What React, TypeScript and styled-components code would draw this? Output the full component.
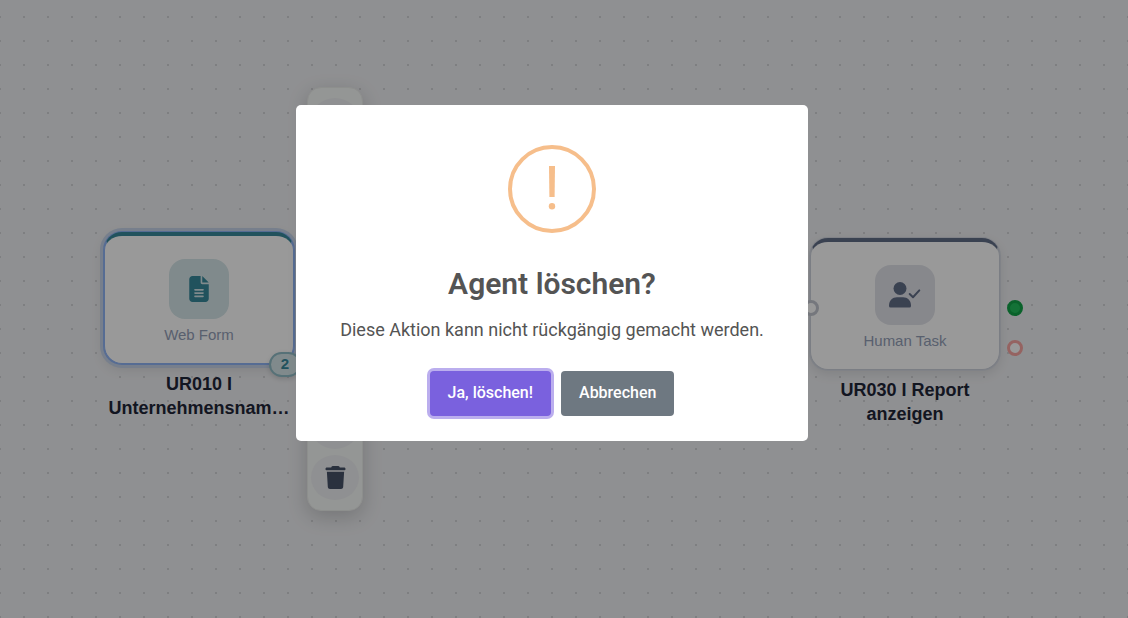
import React from 'react';
import styled, { createGlobalStyle } from 'styled-components';
import { FaFileLines, FaTrash } from 'react-icons/fa6';

const GlobalStyle = createGlobalStyle`
  *, *::before, *::after { box-sizing: border-box; }
  body { margin: 0; font-family: Roboto, 'Liberation Sans', sans-serif; }
`;

const Canvas = styled.main`
  position: relative;
  min-height: 100vh;
  overflow: hidden;
  background-color: #eff0f3;
  background-image: conic-gradient(from 270deg at 2px 2px, #d3d4d7 90deg, transparent 0);
  background-size: 24px 24px;
  background-position: -1px 16px;
  font-family: 'Liberation Sans', Arial, sans-serif;
`;

const Node = styled.article<{ $x: number; $y: number }>`
  position: absolute;
  left: ${(p) => p.$x}px;
  top: ${(p) => p.$y}px;
  width: 190px;
`;

const Card = styled.div<{ $accent: string; $selected?: boolean }>`
  position: relative;
  display: flex;
  flex-direction: column;
  align-items: center;
  gap: 6px;
  height: 132px;
  padding-top: 23px;
  background: #fff;
  border: 1px solid ${(p) => (p.$selected ? '#8fb4f5' : '#cdd2dc')};
  border-top: 4px solid ${(p) => p.$accent};
  border-radius: 18px;
  box-shadow: ${(p) =>
    p.$selected
      ? '0 0 0 1px #8fb4f5, 0 0 0 4px #c6d4ea, 0 4px 14px rgba(0, 0, 0, 0.12)'
      : '0 0 0 1px #d5d9e2, 0 4px 12px rgba(0, 0, 0, 0.1)'};
`;

const Tile = styled.div<{ $background: string; $color: string }>`
  display: grid;
  place-items: center;
  width: 60px;
  height: 60px;
  border-radius: 16px;
  background: ${(p) => p.$background};
  color: ${(p) => p.$color};
`;

const Kind = styled.span`
  font-size: 15px;
  line-height: 20px;
  color: #94a0b8;
`;

const NodeTitle = styled.h3`
  margin: 8px 0 0;
  font-size: 18px;
  line-height: 24px;
  font-weight: 700;
  text-align: center;
  color: #1f2638;
`;

const Badge = styled.span`
  position: absolute;
  right: -8px;
  bottom: -14px;
  width: 32px;
  height: 25px;
  border: 2px solid #8fbcc6;
  border-radius: 13px;
  background: #d5e6e9;
  color: #37899c;
  font-size: 15px;
  line-height: 20px;
  font-weight: 700;
  text-align: center;
  box-shadow: 0 2px 5px rgba(0, 0, 0, 0.15);
`;

const Port = styled.span<{ $x: number; $y: number; $ring: string; $fill: string }>`
  position: absolute;
  left: ${(p) => p.$x}px;
  top: ${(p) => p.$y}px;
  width: 16px;
  height: 16px;
  border: 3px solid ${(p) => p.$ring};
  border-radius: 50%;
  background: ${(p) => p.$fill};
`;

const Toolbar = styled.div`
  position: absolute;
  left: 307px;
  top: 87px;
  display: flex;
  flex-direction: column;
  gap: 6px;
  width: 56px;
  padding: 10px 3px;
  border: 1px solid #eceeec;
  border-radius: 14px;
  background: #f7faf8;
  box-shadow: 0 6px 20px rgba(0, 0, 0, 0.18);
`;

const ToolButton = styled.button`
  display: grid;
  place-items: center;
  height: 45px;
  padding: 0;
  border: 0;
  border-radius: 50%;
  background: #eff0f3;
  color: #475268;
`;

const Backdrop = styled.div`
  position: fixed;
  inset: 0;
  display: grid;
  place-items: center;
  padding: 0 24px 72px 0;
  background: rgba(0, 0, 0, 0.4);
`;

const Dialog = styled.section`
  display: flex;
  flex-direction: column;
  align-items: center;
  width: 512px;
  max-width: 100%;
  padding: 40px 0 25px;
  border-radius: 5px;
  background: #fff;
  color: #545454;
`;

const DialogTitle = styled.h2`
  margin: 33px 0 0;
  font-size: 30px;
  line-height: 36px;
  font-weight: 600;
`;

const DialogText = styled.p`
  margin: 18px 0 0;
  font-size: 18px;
  line-height: 20px;
`;

const Actions = styled.div`
  display: flex;
  gap: 10px;
  margin-top: 31px;
`;

const ActionButton = styled.button<{ $primary?: boolean }>`
  height: 45px;
  padding: 0 18px 2px;
  border: 0;
  border-radius: 4px;
  background: ${(p) => (p.$primary ? '#7a61de' : '#6e7881')};
  box-shadow: ${(p) => (p.$primary ? '0 0 0 3px #bbaeee' : 'none')};
  color: #fff;
  font-family: inherit;
  font-size: 16px;
  font-weight: 500;
`;

const UserCheckIcon = () => (
  <svg width="32" height="26" viewBox="0 0 32 26" fill="currentColor" aria-hidden="true">
    <circle cx="11" cy="6.5" r="6.5" />
    <path d="M0 23.5C0 18.5 3.5 15.3 8 15.3H14C18.5 15.3 22 18.5 22 23.5V24Q22 25.6 20.5 25.6H1.5Q0 25.6 0 24Z" />
    <path d="M20.7 12L24 15.2L30.3 8.4" fill="none" stroke="currentColor" strokeWidth="2" strokeLinecap="round" strokeLinejoin="round" />
  </svg>
);

const WarningIcon = () => (
  <svg width="88" height="88" viewBox="0 0 88 88" fill="#f6be8b" aria-hidden="true">
    <circle cx="44" cy="44" r="42" fill="none" stroke="#f6be8b" strokeWidth="4" />
    <path d="M41 21H47L46.6 52H41.4Z" />
    <circle cx="44" cy="61.3" r="3.2" />
  </svg>
);

export default function App() {
  return (
    <>
      <GlobalStyle />
      <Canvas>
        <Node $x={104} $y={232}>
          <Card $accent="#37899c" $selected>
            <Tile $background="#d5e6e9" $color="#37899c">
              <FaFileLines size={26} />
            </Tile>
            <Kind>Web Form</Kind>
            <Badge>2</Badge>
          </Card>
          <NodeTitle>
            UR010 I<br />
            Unternehmensnam…
          </NodeTitle>
        </Node>

        <Node $x={810} $y={238}>
          <Card $accent="#626e88">
            <Tile $background="#e2e3ea" $color="#626e88">
              <UserCheckIcon />
            </Tile>
            <Kind>Human Task</Kind>
            <Port $x={-8} $y={58} $ring="#c3c7d0" $fill="#fff" />
            <Port $x={196} $y={58} $ring="#12a348" $fill="#22bf5c" />
            <Port $x={196} $y={98} $ring="#f8a5a2" $fill="#fff" />
          </Card>
          <NodeTitle>
            UR030 I Report
            <br />
            anzeigen
          </NodeTitle>
        </Node>

        <Toolbar>
          {Array.from({ length: 7 }, (_, i) => (
            <ToolButton key={i} type="button" />
          ))}
          <ToolButton type="button" aria-label="Löschen">
            <FaTrash size={23} />
          </ToolButton>
        </Toolbar>
      </Canvas>

      <Backdrop>
        <Dialog role="dialog" aria-modal="true" aria-labelledby="dialog-title">
          <WarningIcon />
          <DialogTitle id="dialog-title">Agent löschen?</DialogTitle>
          <DialogText>Diese Aktion kann nicht rückgängig gemacht werden.</DialogText>
          <Actions>
            <ActionButton type="button" $primary>
              Ja, löschen!
            </ActionButton>
            <ActionButton type="button">Abbrechen</ActionButton>
          </Actions>
        </Dialog>
      </Backdrop>
    </>
  );
}
